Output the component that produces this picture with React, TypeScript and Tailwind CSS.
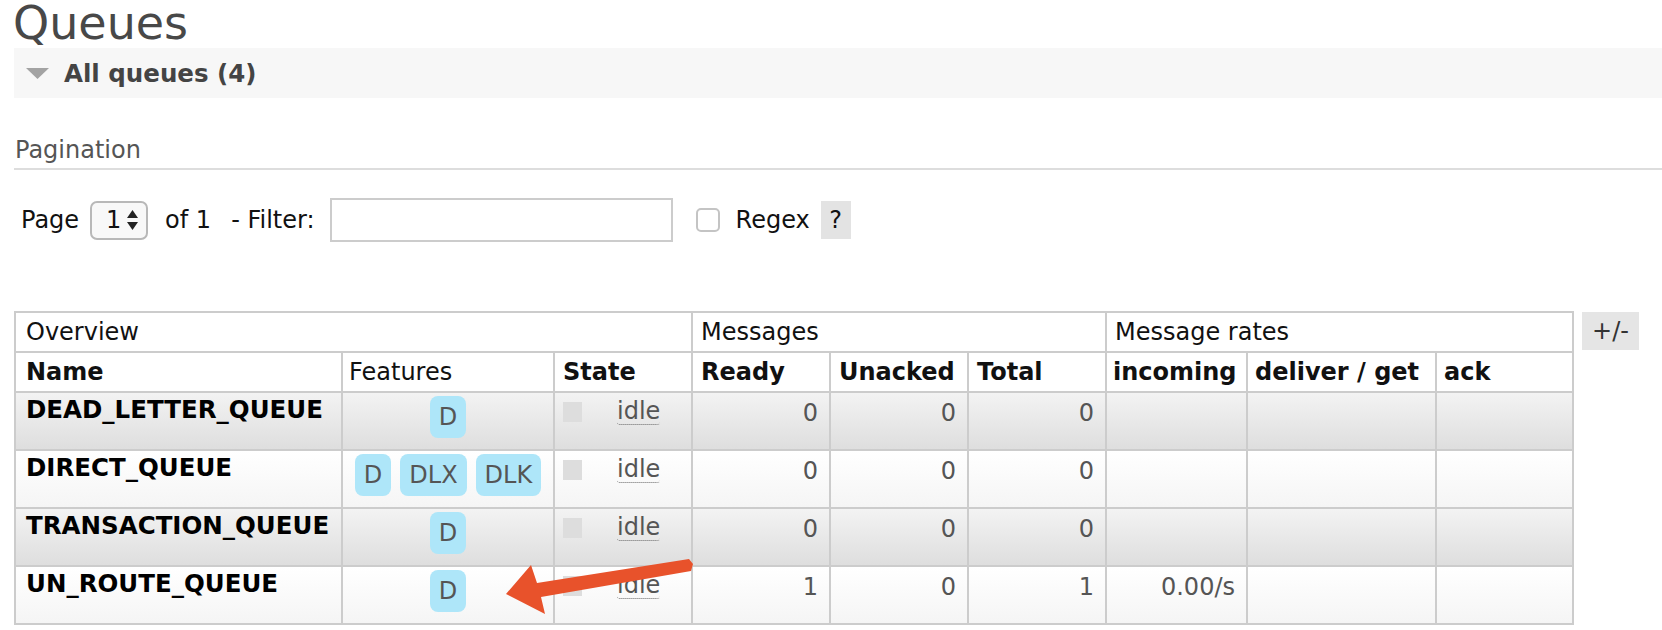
import React from "react";

type Row = {
  name: string;
  features: string[];
  ready: number;
  unacked: number;
  total: number;
  incoming: string;
  alt: boolean;
};

const rows: Row[] = [
  { name: "DEAD_LETTER_QUEUE", features: ["D"], ready: 0, unacked: 0, total: 0, incoming: "", alt: true },
  { name: "DIRECT_QUEUE", features: ["D", "DLX", "DLK"], ready: 0, unacked: 0, total: 0, incoming: "", alt: false },
  { name: "TRANSACTION_QUEUE", features: ["D"], ready: 0, unacked: 0, total: 0, incoming: "", alt: true },
  { name: "UN_ROUTE_QUEUE", features: ["D"], ready: 1, unacked: 0, total: 1, incoming: "0.00/s", alt: false },
];

const cell = "border-r-2 border-b-2 border-[#cccccc]";

function DataRow({ r }: { r: Row }) {
  const bg = r.alt
    ? "bg-linear-to-b from-[#f3f3f3] to-[#dedede]"
    : "bg-linear-to-b from-[#ffffff] to-[#f5f5f5]";
  const c = `${cell} ${bg} h-[58px]`;
  return (
    <>
      <div className={`${c} pl-[10px] pt-[3px] text-[24.5px] leading-[28px] font-bold text-black`}>{r.name}</div>
      <div className={`${c} pt-[3px] flex justify-center gap-[9px]`}>
        {r.features.map((f) => (
          <span
            key={f}
            className="h-[42px] px-[9px] rounded-[8px] bg-[#aee6f9] text-[#555] text-[24px] leading-[28px] flex items-center"
          >
            {f}
          </span>
        ))}
      </div>
      <div className={`${c} flex items-start`}>
        <span className="ml-[8px] mt-[9px] w-[19px] h-[20px] bg-[#dddddd]" />
        <span className="ml-[35px] mt-[6px] text-[24px] leading-[25px] text-[#555] border-b border-dotted border-[#666] rounded-b-[3px]">
          idle
        </span>
      </div>
      <div className={`${c} pr-[11px] pt-[6px] text-right text-[24px] leading-[28px] text-[#555]`}>{r.ready}</div>
      <div className={`${c} pr-[11px] pt-[6px] text-right text-[24px] leading-[28px] text-[#555]`}>{r.unacked}</div>
      <div className={`${c} pr-[11px] pt-[6px] text-right text-[24px] leading-[28px] text-[#555]`}>{r.total}</div>
      <div className={`${c} pr-[11px] pt-[6px] text-right text-[24px] leading-[28px] text-[#555]`}>{r.incoming}</div>
      <div className={c} />
      <div className={c} />
    </>
  );
}

export default function App() {
  return (
    <div className="relative w-[1662px] h-[630px] overflow-hidden bg-white font-['DejaVu_Sans',sans-serif] text-[24px] text-[#222]">
      <h1 className="ml-[13px] mt-[0px] text-[46px] leading-[46px] font-normal text-[#484848]">Queues</h1>

      <div className="ml-[14px] mt-[2px] h-[50px] bg-[#f7f7f7] flex items-center">
        <svg className="ml-[12px]" width="23" height="11" viewBox="0 0 23 11">
          <polygon points="0,0 23,0 11.5,11" fill="#a3a3a3" />
        </svg>
        <span className="ml-[15px] pt-[2px] text-[24.5px] font-bold text-[#444] leading-[28px]">All queues (4)</span>
      </div>

      <div className="ml-[14px] mt-[38px] pb-[4px] border-b-2 border-[#dddddd]">
        <span className="block ml-[1px] leading-[28px] text-[#555]">Pagination</span>
      </div>

      <div className="ml-[21px] mt-[28px] h-[44px] flex items-center leading-[28px] text-[#111]">
        <span>Page</span>
        <div className="ml-[11px] w-[58px] h-[39px] border-2 border-[#b8b8b8] rounded-[7px] bg-[#f8f8f8] flex items-center">
          <span className="ml-[14px]">1</span>
          <svg className="ml-[6px]" width="11" height="20" viewBox="0 0 11 20">
            <polygon points="5.5,0 11,8 0,8" fill="#222" />
            <polygon points="0,12 11,12 5.5,20" fill="#222" />
          </svg>
        </div>
        <span className="ml-[17px]">of 1</span>
        <span className="ml-[20px]">- Filter:</span>
        <div className="ml-[15px] w-[343px] h-[44px] border-2 border-[#cccccc] bg-white" />
        <div className="ml-[23px] w-[24px] h-[24px] border-2 border-[#c4c4c4] rounded-[5px] bg-white" />
        <span className="ml-[16px]">Regex</span>
        <span className="ml-[11px] w-[30px] h-[38px] bg-[#e3e3e3] flex items-center justify-center">?</span>
      </div>

      <div className="ml-[14px] mt-[69px] flex items-start gap-[8px]">
        <div className="grid grid-cols-[327px_212px_138px_138px_138px_138px_141px_189px_137px] border-l-2 border-t-2 border-[#cccccc] text-[#111]">
          <div className={`${cell} col-span-3 h-[40px] pl-[10px] flex items-center leading-[28px]`}>Overview</div>
          <div className={`${cell} col-span-3 h-[40px] pl-[8px] flex items-center leading-[28px]`}>Messages</div>
          <div className={`${cell} col-span-3 h-[40px] pl-[8px] flex items-center leading-[28px]`}>Message rates</div>

          <div className={`${cell} h-[40px] pl-[10px] flex items-center leading-[28px] font-bold`}>Name</div>
          <div className={`${cell} h-[40px] pl-[6px] flex items-center leading-[28px]`}>Features</div>
          <div className={`${cell} h-[40px] pl-[8px] flex items-center leading-[28px] font-bold`}>State</div>
          <div className={`${cell} h-[40px] pl-[8px] flex items-center leading-[28px] font-bold`}>Ready</div>
          <div className={`${cell} h-[40px] pl-[8px] flex items-center leading-[28px] font-bold`}>Unacked</div>
          <div className={`${cell} h-[40px] pl-[8px] flex items-center leading-[28px] font-bold`}>Total</div>
          <div className={`${cell} h-[40px] pl-[6px] flex items-center leading-[28px] font-bold`}>incoming</div>
          <div className={`${cell} h-[40px] pl-[7px] flex items-center leading-[28px] font-bold`}>deliver / get</div>
          <div className={`${cell} h-[40px] pl-[7px] flex items-center leading-[28px] font-bold`}>ack</div>

          {rows.map((r) => (
            <DataRow key={r.name} r={r} />
          ))}
        </div>
        <div className="mt-[1px] w-[57px] h-[38px] bg-[#e5e5e5] flex items-center justify-center leading-[28px] text-[#333]">
          +/-
        </div>
      </div>

      <svg className="absolute left-0 top-0 pointer-events-none" width="1662" height="630" viewBox="0 0 1662 630">
        <polygon
          points="506,594 531,565 537,583 689,559 693,564 691,571 541,597 545,614"
          fill="#e8522b"
        />
      </svg>
    </div>
  );
}
